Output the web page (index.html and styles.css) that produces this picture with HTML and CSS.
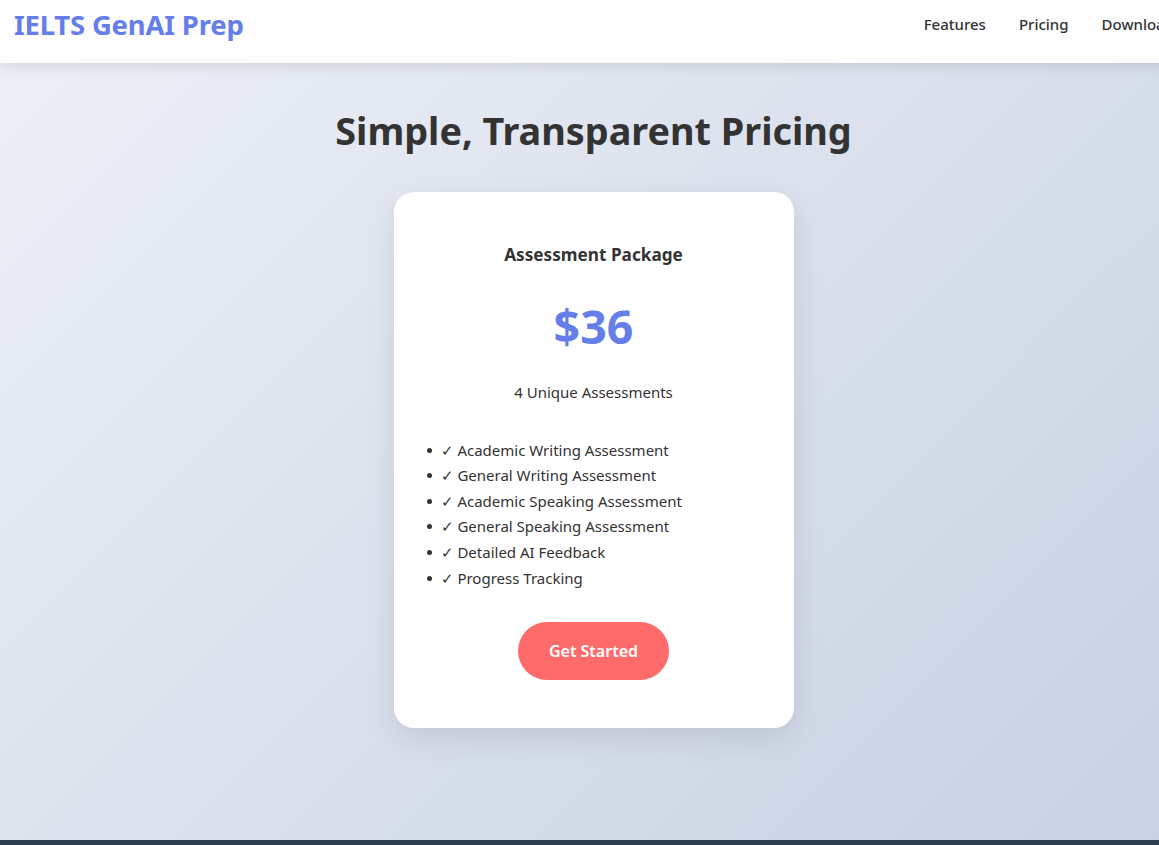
FILE: index.html
```html
<!DOCTYPE html>
<html lang="en">
<head>
<meta charset="utf-8">
<title>IELTS GenAI Prep - Pricing</title>
<link rel="stylesheet" href="styles.css">
</head>
<body>
<header class="navbar">
  <div class="nav-inner">
    <a class="logo" href="#">IELTS GenAI Prep</a>
    <nav class="nav-links">
      <a href="#">Features</a>
      <a href="#">Pricing</a>
      <a href="#">Download</a>
    </nav>
  </div>
</header>
<main class="pricing">
  <h2 class="pricing-title">Simple, Transparent Pricing</h2>
  <div class="card">
    <h3 class="card-title">Assessment Package</h3>
    <div class="price">$36</div>
    <p class="price-note">4 Unique Assessments</p>
    <ul class="features">
      <li>✓ Academic Writing Assessment</li>
      <li>✓ General Writing Assessment</li>
      <li>✓ Academic Speaking Assessment</li>
      <li>✓ General Speaking Assessment</li>
      <li>✓ Detailed AI Feedback</li>
      <li>✓ Progress Tracking</li>
    </ul>
    <a class="btn" href="#">Get Started</a>
  </div>
</main>
<footer class="footer">
  <p>&copy; IELTS GenAI Prep</p>
</footer>
</body>
</html>
```

FILE: styles.css
```css
* { box-sizing: border-box; }
html, body { margin: 0; padding: 0; }
body {
  font-family: "Noto Sans", "Open Sans", sans-serif;
  color: #333;
  line-height: 1.6;
  overflow-x: hidden;
  background: #2c3e50;
}
a { text-decoration: none; }

.navbar {
  position: relative;
  z-index: 2;
  width: 1187px;
  height: 63px;
  background: #fdfdfe;
  box-shadow: 0 2px 14px rgba(0, 0, 0, 0.12);
  overflow: hidden;
}
.nav-inner {
  width: 1228px;
  display: flex;
  align-items: center;
  justify-content: space-between;
  padding: 7px 14px 0 14px;
}
.logo {
  font-size: 27.5px;
  line-height: 36px;
  font-weight: 700;
  color: #667eea;
  letter-spacing: -0.2px;
}
.nav-links {
  display: flex;
  gap: 33px;
  padding-right: 40px;
}
.nav-links a {
  color: #333;
  font-size: 15px;
  line-height: 24px;
  font-weight: 500;
  margin-top: -2px;
}

.pricing {
  width: 1187px;
  height: 777px;
  background: linear-gradient(135deg, #eceff6 0%, #c8d2e3 100%);
  padding-top: 44px;
  display: flex;
  flex-direction: column;
  align-items: center;
}
.pricing-title {
  margin: 0 0 37px;
  font-size: 37.8px;
  line-height: 48px;
  font-weight: 700;
  color: #333;
}
.card {
  width: 400px;
  background: #fff;
  border-radius: 20px;
  padding: 48px 32px;
  box-shadow: 0 10px 30px rgba(0, 0, 0, 0.1);
  text-align: center;
}
.card-title {
  margin: 0 0 18px;
  font-size: 17.2px;
  line-height: 30px;
  font-weight: 700;
}
.price {
  font-size: 46.5px;
  line-height: 76px;
  font-weight: 700;
  color: #667eea;
}
.price-note {
  margin: 16px 0 0;
  font-size: 15px;
  line-height: 25.6px;
}
.features {
  list-style: none;
  margin: 32px 0 31px;
  padding: 0;
  text-align: left;
}
.features li {
  font-size: 15px;
  line-height: 25.6px;
}
.features li::before {
  content: "";
  display: inline-block;
  width: 5px;
  height: 5px;
  border-radius: 50%;
  background: #333;
  margin: 0 9px 0 1px;
  vertical-align: 3px;
}
.btn {
  display: inline-block;
  background: #ff6b6b;
  color: #fff;
  font-size: 16px;
  font-weight: 600;
  line-height: 26px;
  padding: 16px 31px;
  border-radius: 30px;
}

.footer {
  width: 1187px;
  background: #2c3e50;
  color: #fff;
  text-align: center;
  padding: 48px 20px;
  margin: 0;
}
.footer p { margin: 0; }
```
